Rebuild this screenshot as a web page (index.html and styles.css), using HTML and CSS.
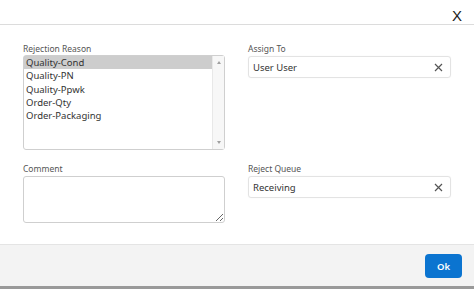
FILE: index.html
```html
<!DOCTYPE html>
<html>
<head>
<meta charset="utf-8">
<link rel="stylesheet" href="styles.css">
</head>
<body>
<div class="dialog">
  <div class="header">
    <span class="close">X</span>
  </div>
  <div class="content">
    <div class="field">
      <div class="label">Rejection Reason</div>
      <div class="listbox">
        <div class="options">
          <div class="option selected">Quality-Cond</div>
          <div class="option">Quality-PN</div>
          <div class="option">Quality-Ppwk</div>
          <div class="option">Order-Qty</div>
          <div class="option">Order-Packaging</div>
        </div>
        <div class="scrollbar">
          <span class="arrow up"></span>
          <span class="arrow down"></span>
        </div>
      </div>
    </div>
    <div class="field">
      <div class="label">Assign To</div>
      <div class="input">
        <span class="value">User User</span>
        <svg class="clear" width="9" height="9" viewBox="0 0 9 9"><path d="M1 1L8 8M8 1L1 8" stroke="#555" stroke-width="1.2" fill="none"/></svg>
      </div>
    </div>
    <div class="field">
      <div class="label">Comment</div>
      <textarea class="comment"></textarea>
    </div>
    <div class="field">
      <div class="label">Reject Queue</div>
      <div class="input">
        <span class="value">Receiving</span>
        <svg class="clear" width="9" height="9" viewBox="0 0 9 9"><path d="M1 1L8 8M8 1L1 8" stroke="#555" stroke-width="1.2" fill="none"/></svg>
      </div>
    </div>
  </div>
  <div class="footer">
    <button class="ok">Ok</button>
  </div>
</div>
</body>
</html>
```

FILE: styles.css
```css
html, body {
  margin: 0;
  padding: 0;
  background: #ffffff;
}
body {
  font-family: "Noto Sans", "Open Sans", sans-serif;
  color: #333;
}
.dialog {
  display: flex;
  flex-direction: column;
  height: 289px;
  width: 474px;
}
.header {
  height: 24px;
  border-bottom: 1px solid #dcdcdc;
  display: flex;
  justify-content: flex-end;
  align-items: flex-end;
  padding-right: 12px;
  box-sizing: content-box;
}
.close {
  font-family: "Liberation Sans", sans-serif;
  font-size: 15px;
  line-height: 15px;
  color: #222;
  margin-bottom: 1px;
}
.content {
  flex: 1;
  display: grid;
  grid-template-columns: 202px 203px;
  column-gap: 23px;
  row-gap: 13px;
  align-content: start;
  align-items: start;
  padding: 18px 23px 0 23px;
}
.field {
  display: flex;
  flex-direction: column;
}
.label {
  font-size: 8.5px;
  line-height: 12px;
  color: #555;
  margin-bottom: 1px;
}
.listbox {
  height: 95px;
  box-sizing: border-box;
  border: 1px solid #cfcfcf;
  border-radius: 3px;
  display: flex;
  margin-top: -1px;
}
.options {
  flex: 1;
  padding-top: 0;
}
.option {
  font-size: 9.5px;
  line-height: 13.3px;
  padding-left: 2px;
  color: #333;
}
.option.selected {
  background: #cdcdcd;
}
.scrollbar {
  width: 11px;
  border-left: 1px solid #e8e8e8;
  background: #f7f7f7;
  display: flex;
  flex-direction: column;
  justify-content: space-between;
  align-items: center;
  padding: 5px 0 5px 0;
}
.arrow {
  width: 0;
  height: 0;
  border-left: 2.5px solid transparent;
  border-right: 2.5px solid transparent;
}
.arrow.up {
  border-bottom: 3px solid #a0a0a0;
}
.arrow.down {
  border-top: 3px solid #a0a0a0;
}
.input {
  height: 22px;
  box-sizing: border-box;
  border: 1px solid #e3e3e3;
  border-radius: 3px;
  box-shadow: 0 0 1px rgba(0,0,0,0.08);
  display: flex;
  align-items: center;
  justify-content: space-between;
  padding: 0 7px 0 4px;
}
.value {
  font-size: 9.5px;
  color: #333;
}
.clear {
  display: block;
}
.comment {
  height: 47px;
  box-sizing: border-box;
  border: 1px solid #cfcfcf;
  border-radius: 3px;
  resize: vertical;
  margin: 0;
  padding: 2px;
  font-family: inherit;
}
.footer {
  height: 41px;
  border-top: 1px solid #e4e4e4;
  border-bottom: 3px solid #999;
  background: #f3f3f3;
  display: flex;
  justify-content: flex-end;
  align-items: center;
  padding-right: 12px;
}
.ok {
  width: 37px;
  height: 24px;
  border: none;
  border-radius: 4px;
  background: #0b74d0;
  color: #fff;
  font-family: "Noto Sans", sans-serif;
  font-size: 9.5px;
  font-weight: 600;
  padding: 0;
  margin-top: 1px;
}
```
